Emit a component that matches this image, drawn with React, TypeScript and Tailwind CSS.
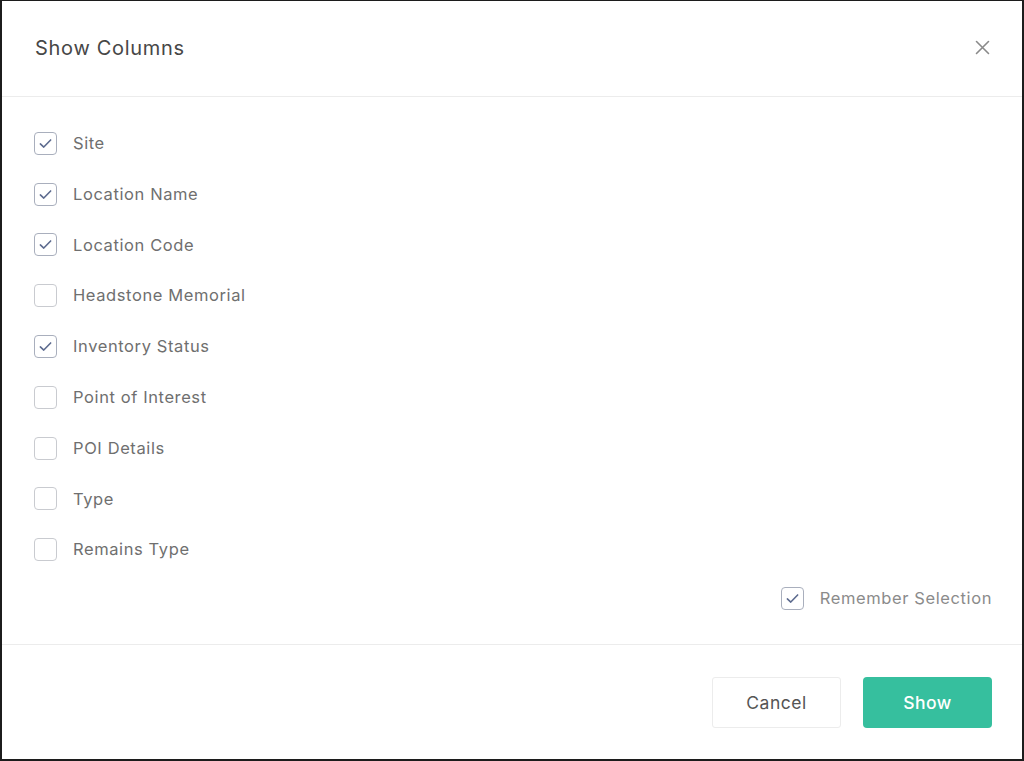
import * as React from 'react';

const columns = [
  { label: 'Site', checked: true },
  { label: 'Location Name', checked: true },
  { label: 'Location Code', checked: true },
  { label: 'Headstone Memorial', checked: false },
  { label: 'Inventory Status', checked: true },
  { label: 'Point of Interest', checked: false },
  { label: 'POI Details', checked: false },
  { label: 'Type', checked: false },
  { label: 'Remains Type', checked: false },
];

function Box({ checked }: { checked: boolean }) {
  return (
    <span
      className={
        'flex h-[23px] w-[23px] shrink-0 items-center justify-center rounded-[4px] border bg-white ' +
        (checked ? 'border-[#a9afbd]' : 'border-[#c9cbd0]')
      }
    >
      {checked && (
        <svg width="15" height="15" viewBox="0 0 14 14" fill="none">
          <path d="M2.2 7.4 L5.4 10.3 L11.8 3.7" stroke="#5d6b8f" strokeWidth="1.5" strokeLinecap="round" strokeLinejoin="round" />
        </svg>
      )}
    </span>
  );
}

export default function App() {
  const [items, setItems] = React.useState(columns);
  const [remember, setRemember] = React.useState(true);

  const toggle = (i: number) =>
    setItems(items.map((c, j) => (j === i ? { ...c, checked: !c.checked } : c)));

  return (
    <div
      className="flex h-[761px] w-[1024px] flex-col border-x-2 border-b-2 border-t border-[#1c1c1c] bg-white"
      style={{ fontFamily: 'Inter, "Open Sans", sans-serif' }}
    >
      <div className="flex h-[95px] shrink-0 items-center justify-between pb-[2px] pl-[33px] pr-[28px]">
        <h2 className="text-[20px] font-normal tracking-[0.7px] text-[#474747]">Show Columns</h2>
        <button className="flex h-6 w-6 items-center justify-center">
          <svg width="15" height="15" viewBox="0 0 15 15">
            <path d="M1.5 1.5 L13.5 13.5 M13.5 1.5 L1.5 13.5" stroke="#8a8a8a" strokeWidth="1.6" strokeLinecap="round" />
          </svg>
        </button>
      </div>
      <div className="h-px bg-[#ececec]" />

      <div className="flex flex-col pt-[21px] pl-[32px] pr-[30px]">
        {items.map((c, i) => (
          <label key={c.label} className="flex h-[50.8px] cursor-pointer items-center gap-[16px]" onClick={() => toggle(i)}>
            <Box checked={c.checked} />
            <span className="text-[16.5px] tracking-[0.6px] text-[#6f6f6f]">{c.label}</span>
          </label>
        ))}
        <div className="flex h-[46px] items-center justify-end">
          <label className="flex cursor-pointer items-center gap-[16px]" onClick={() => setRemember(!remember)}>
            <Box checked={remember} />
            <span className="text-[16.5px] tracking-[0.6px] text-[#8b8b8b]">Remember Selection</span>
          </label>
        </div>
      </div>

      <div className="mt-[23px] h-px bg-[#ececec]" />

      <div className="flex justify-end gap-[22px] pt-[32px] pr-[30px]">
        <button className="h-[51px] w-[129px] rounded-[3px] border border-[#ececec] bg-white text-[17.5px] tracking-[0.5px] text-[#555555]">
          Cancel
        </button>
        <button className="h-[51px] w-[129px] rounded-[4px] bg-[#36bf9e] text-[17.5px] font-medium tracking-[0.5px] text-white">
          Show
        </button>
      </div>
    </div>
  );
}
